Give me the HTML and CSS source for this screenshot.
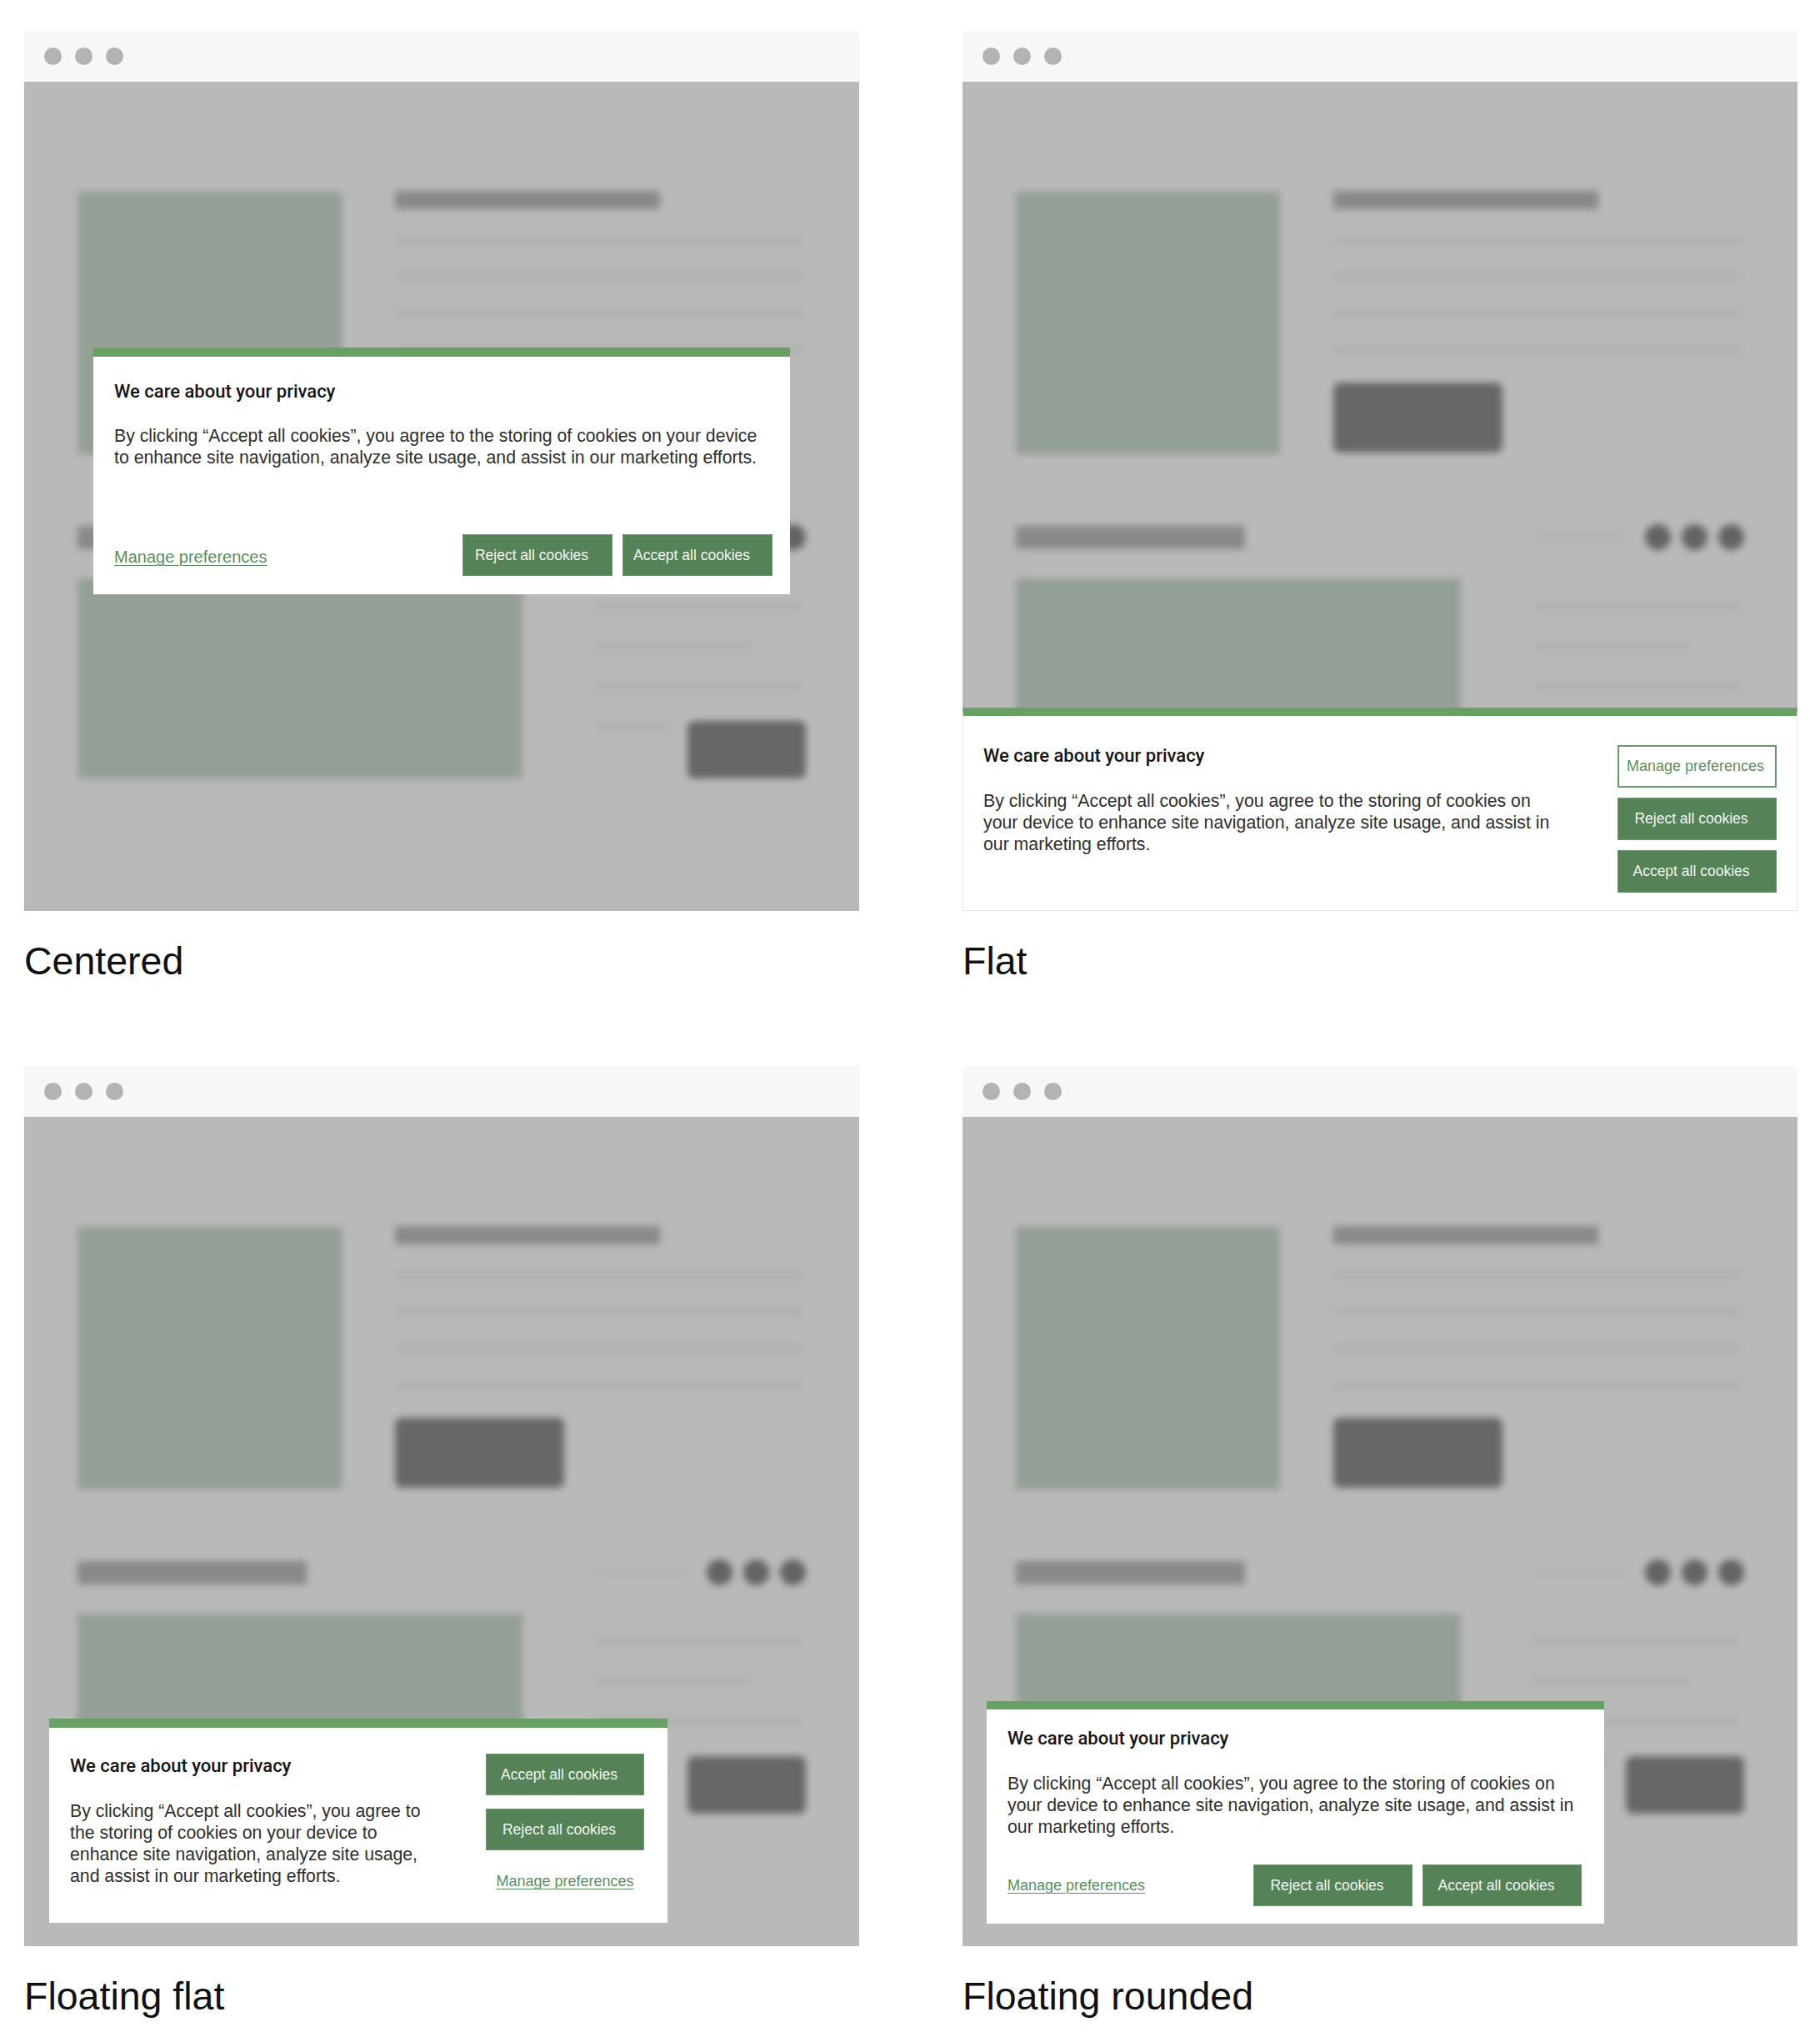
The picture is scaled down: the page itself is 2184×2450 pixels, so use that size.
FILE: index.html
```html
<!DOCTYPE html>
<html lang="en">
<head>
<meta charset="utf-8">
<title>Cookie banner styles</title>
<link rel="stylesheet" href="styles.css">
</head>
<body>
<div class="page">

  <div class="card">
    <div class="panel">
      <div class="bar"><span class="dot"></span><span class="dot"></span><span class="dot"></span></div>
      <div class="screen">
        <div class="mock">
          <div class="row-a">
            <div class="img1"></div>
            <div class="col-a">
              <div class="heading"></div>
              <div class="line"></div><div class="line"></div><div class="line"></div><div class="line"></div>
              <div class="cta"></div>
            </div>
          </div>
          <div class="row-b">
            <div class="col-b1"><div class="bar2"></div><div class="img2"></div></div>
            <div class="col-b2">
              <div class="head-b"><div class="faint"></div><div class="circles"><span class="circle"></span><span class="circle"></span><span class="circle"></span></div></div>
              <div class="line l1"></div><div class="line l2"></div><div class="line l3"></div>
              <div class="last"><div class="line short"></div><div class="cta2"></div></div>
            </div>
          </div>
        </div>
        <div class="dialog dlg-center">
          <h2 class="d-title">We care about your privacy</h2>
          <p class="d-text">By clicking “Accept all cookies”, you agree to the storing of cookies on your device to enhance site navigation, analyze site usage, and assist in our marketing efforts.</p>
          <div class="footer">
            <a class="link link-lg" href="#">Manage preferences</a>
            <div class="btns">
              <span class="btn">Reject all cookies</span>
              <span class="btn">Accept all cookies</span>
            </div>
          </div>
        </div>
      </div>
    </div>
    <div class="label">Centered</div>
  </div>

  <div class="card">
    <div class="panel">
      <div class="bar"><span class="dot"></span><span class="dot"></span><span class="dot"></span></div>
      <div class="screen">
        <div class="mock">
          <div class="row-a">
            <div class="img1"></div>
            <div class="col-a">
              <div class="heading"></div>
              <div class="line"></div><div class="line"></div><div class="line"></div><div class="line"></div>
              <div class="cta"></div>
            </div>
          </div>
          <div class="row-b">
            <div class="col-b1"><div class="bar2"></div><div class="img2"></div></div>
            <div class="col-b2">
              <div class="head-b"><div class="faint"></div><div class="circles"><span class="circle"></span><span class="circle"></span><span class="circle"></span></div></div>
              <div class="line l1"></div><div class="line l2"></div><div class="line l3"></div>
              <div class="last"><div class="line short"></div><div class="cta2"></div></div>
            </div>
          </div>
        </div>
        <div class="dialog dlg-flat">
          <div class="text-col">
            <h2 class="d-title">We care about your privacy</h2>
            <p class="d-text">By clicking “Accept all cookies”, you agree to the storing of cookies on your device to enhance site navigation, analyze site usage, and assist in our marketing efforts.</p>
          </div>
          <div class="stack">
            <span class="btn btn-outline">Manage preferences</span>
            <span class="btn">Reject all cookies</span>
            <span class="btn">Accept all cookies</span>
          </div>
        </div>
      </div>
    </div>
    <div class="label">Flat</div>
  </div>

  <div class="card">
    <div class="panel">
      <div class="bar"><span class="dot"></span><span class="dot"></span><span class="dot"></span></div>
      <div class="screen">
        <div class="mock">
          <div class="row-a">
            <div class="img1"></div>
            <div class="col-a">
              <div class="heading"></div>
              <div class="line"></div><div class="line"></div><div class="line"></div><div class="line"></div>
              <div class="cta"></div>
            </div>
          </div>
          <div class="row-b">
            <div class="col-b1"><div class="bar2"></div><div class="img2"></div></div>
            <div class="col-b2">
              <div class="head-b"><div class="faint"></div><div class="circles"><span class="circle"></span><span class="circle"></span><span class="circle"></span></div></div>
              <div class="line l1"></div><div class="line l2"></div><div class="line l3"></div>
              <div class="last"><div class="line short"></div><div class="cta2"></div></div>
            </div>
          </div>
        </div>
        <div class="dialog dlg-ff">
          <div class="text-col">
            <h2 class="d-title">We care about your privacy</h2>
            <p class="d-text">By clicking “Accept all cookies”, you agree to the storing of cookies on your device to enhance site navigation, analyze site usage, and assist in our marketing efforts.</p>
          </div>
          <div class="stack">
            <span class="btn">Accept all cookies</span>
            <span class="btn">Reject all cookies</span>
            <a class="link link-sm" href="#">Manage preferences</a>
          </div>
        </div>
      </div>
    </div>
    <div class="label">Floating flat</div>
  </div>

  <div class="card">
    <div class="panel">
      <div class="bar"><span class="dot"></span><span class="dot"></span><span class="dot"></span></div>
      <div class="screen">
        <div class="mock">
          <div class="row-a">
            <div class="img1"></div>
            <div class="col-a">
              <div class="heading"></div>
              <div class="line"></div><div class="line"></div><div class="line"></div><div class="line"></div>
              <div class="cta"></div>
            </div>
          </div>
          <div class="row-b">
            <div class="col-b1"><div class="bar2"></div><div class="img2"></div></div>
            <div class="col-b2">
              <div class="head-b"><div class="faint"></div><div class="circles"><span class="circle"></span><span class="circle"></span><span class="circle"></span></div></div>
              <div class="line l1"></div><div class="line l2"></div><div class="line l3"></div>
              <div class="last"><div class="line short"></div><div class="cta2"></div></div>
            </div>
          </div>
        </div>
        <div class="dialog dlg-fr">
          <h2 class="d-title">We care about your privacy</h2>
          <p class="d-text">By clicking “Accept all cookies”, you agree to the storing of cookies on your device to enhance site navigation, analyze site usage, and assist in our marketing efforts.</p>
          <div class="footer">
            <a class="link link-sm" href="#">Manage preferences</a>
            <div class="btns">
              <span class="btn">Reject all cookies</span>
              <span class="btn">Accept all cookies</span>
            </div>
          </div>
        </div>
      </div>
    </div>
    <div class="label">Floating rounded</div>
  </div>

</div>
</body>
</html>
```

FILE: styles.css
```css
* { box-sizing: border-box; }

body {
  margin: 0;
  background: #ffffff;
  font-family: "Liberation Sans", Arial, sans-serif;
  color: #111111;
}

.page {
  display: grid;
  grid-template-columns: 1002px 1002px;
  column-gap: 124px;
  row-gap: 98px;
  padding: 37px 0 0 29px;
}

.panel { width: 1002px; }

.bar {
  height: 61px;
  background: #f7f7f7;
  display: flex;
  align-items: center;
  gap: 16px;
  padding-left: 24px;
}

.dot {
  width: 21px;
  height: 21px;
  border-radius: 50%;
  background: #b3b3b3;
}

.screen {
  position: relative;
  height: 995px;
  background: #b9b9b9;
  overflow: hidden;
}

/* blurred page mock */
.mock {
  filter: blur(4.5px);
  padding: 131px 0 0 64px;
}

.row-a { display: flex; gap: 64px; }

.img1 {
  width: 317px;
  height: 315px;
  margin-top: 1px;
  background: #949f95;
}

.col-a {
  width: 490px;
  display: flex;
  flex-direction: column;
}

.heading {
  width: 318px;
  height: 22px;
  background: #898989;
}

.line {
  height: 10px;
  background: #aeb1ae;
}

.col-a .line { margin-top: 34px; }
.col-a .heading + .line { margin-top: 32px; }

.cta {
  width: 203px;
  height: 84px;
  margin-top: 34px;
  border-radius: 8px;
  background: #666866;
}

.row-b {
  display: flex;
  gap: 88px;
  margin-top: 86px;
}

.col-b1 { width: 534px; }

.bar2 {
  width: 275px;
  height: 28px;
  background: #898989;
}

.img2 {
  width: 534px;
  height: 240px;
  margin-top: 35px;
  background: #949f95;
}

.col-b2 {
  width: 252px;
  display: flex;
  flex-direction: column;
}

.head-b {
  height: 31px;
  margin-top: -2px;
  display: flex;
  align-items: center;
  justify-content: space-between;
}

.faint {
  width: 109px;
  height: 10px;
  background: #b3b5b3;
}

.circles { display: flex; gap: 13px; }

.circle {
  width: 31px;
  height: 31px;
  border-radius: 50%;
  background: #626462;
}

.col-b2 .l1 { width: 247px; margin-top: 62px; }
.col-b2 .l2 { width: 187px; margin-top: 38px; }
.col-b2 .l3 { width: 247px; margin-top: 38px; }

.last {
  display: flex;
  align-items: flex-start;
  margin-top: 37px;
}

.line.short { width: 87px; margin-top: 2px; }

.cta2 {
  width: 142px;
  height: 69px;
  margin-left: auto;
  border-radius: 8px;
  background: #666866;
}

/* dialogs */
.dialog {
  position: absolute;
  background: #ffffff;
  border-top: 11px solid #68a066;
}

.d-title {
  margin: 0;
  font-family: Roboto, "Liberation Sans", sans-serif;
  font-weight: 500;
  font-size: 22px;
  line-height: 26px;
  color: #151515;
}

.d-text {
  margin: 28px 0 0;
  font-size: 21.25px;
  line-height: 26px;
  color: #2e2e2e;
}

.btn {
  height: 50px;
  display: flex;
  align-items: center;
  justify-content: center;
  padding-right: 14px;
  background: #558257;
  border: 1px solid #6c976d;
  color: #f2f6f2;
  font-size: 17.5px;
  white-space: nowrap;
}

.btn-outline {
  background: #ffffff;
  border: 2px solid #6a9a6b;
  color: #5b8f5d;
  font-size: 18px;
  padding-right: 4px;
}

.link {
  color: #5b8f5d;
  text-decoration: underline;
  text-decoration-thickness: 1px;
  text-underline-offset: 3px;
  white-space: nowrap;
}

.link-lg { font-size: 20px; line-height: 26px; padding-top: 4px; }
.link-sm { font-size: 18px; line-height: 24px; }

.footer {
  display: flex;
  align-items: center;
  justify-content: space-between;
}

.btns { display: flex; gap: 12px; }

/* centered */
.dlg-center {
  left: 83px;
  top: 319px;
  width: 836px;
  height: 296px;
  display: flex;
  flex-direction: column;
  padding: 28.5px 21px 22px 25px;
}

.dlg-center .d-text { margin-top: 27px; }
.dlg-center .footer { margin-top: auto; }
.dlg-center .btn { width: 180px; }

/* flat */
.dlg-flat {
  left: 0;
  right: 0;
  bottom: 0;
  height: 244px;
  display: flex;
  border: 1px solid #e6e6e6;
  border-top: 10px solid #68a066;
  padding: 35px 24px 0 24px;
}

.dlg-flat .text-col { width: 688px; }

.stack {
  width: 191px;
  margin-left: auto;
  display: flex;
  flex-direction: column;
  gap: 12px;
}

.stack .btn { height: 51px; }

/* floating flat */
.dlg-ff {
  left: 30px;
  bottom: 28px;
  width: 742px;
  display: flex;
  padding: 31px 28px 38px 25px;
}

.dlg-ff .text-col { width: 430px; padding-top: 2px; }
.dlg-ff .stack { width: 190px; gap: 16px; align-items: stretch; }
.dlg-ff .stack .btn { height: 50px; }
.dlg-ff .link { align-self: center; margin-top: 9px; }

/* floating rounded */
.dlg-fr {
  left: 29px;
  bottom: 27px;
  width: 741px;
  border-top-width: 10px;
  padding: 22.5px 27px 21px 25px;
}

.dlg-fr .d-text { margin-top: 28px; }
.dlg-fr .footer { margin-top: 32px; }
.dlg-fr .btn { width: 191px; }

.label {
  margin-top: 32px;
  font-size: 46.5px;
  line-height: 56px;
  color: #111111;
}
```
